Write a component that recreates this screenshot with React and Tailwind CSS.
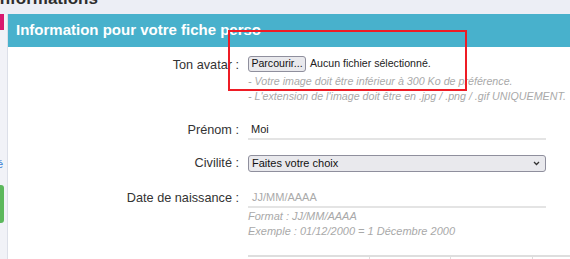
import React from 'react';

const font = { fontFamily: '"Liberation Sans", Arial, sans-serif' };

const Row = ({ label, labelClass = '', className = '', children }) => (
  <div className={`flex items-start ${className}`}>
    <div className={`w-[232px] shrink-0 text-right text-[12.7px] text-[#333] pr-[1px] ${labelClass}`}>{label}</div>
    <div className="ml-[8px] w-[298px] shrink-0">{children}</div>
  </div>
);

const Help = ({ lines, className = '' }) => (
  <div className={`text-[10.7px] italic leading-[15px] text-[#a9a9a9] ${className}`}>
    {lines.map((l) => (
      <div key={l} className="whitespace-nowrap">{l}</div>
    ))}
  </div>
);

export default function App() {
  return (
    <div className="relative h-[259px] w-[570px] overflow-hidden bg-[#eceef5]" style={font}>
      {/* page title, mostly scrolled away */}
      <div className="h-[14px] overflow-hidden">
        <div className="-ml-[5px] -mt-[10px] text-[17px] font-bold leading-[17px] text-[#2d2d2d]">Informations</div>
      </div>

      <div className="flex h-[245px]">
        {/* side menu edge */}
        <div className="w-[8px] shrink-0 overflow-hidden border-r border-[#dcdfe8] bg-[#f1f2f7]">
          <div className="h-[16px] w-[4px] bg-[#d8186f]" />
          <div className="mt-[128px] -ml-[3px] h-[12px] text-[11px] leading-[12px] text-[#3b82d6]">é</div>
          <div className="mt-[15px] h-[38px] w-[4px] rounded-r-[3px] bg-[#5cb85c]" />
        </div>

        {/* card */}
        <div className="min-w-0 flex-1 bg-white">
          <div className="flex h-[33px] items-center bg-[#48b1cc] pl-[8px] text-[15px] font-bold whitespace-nowrap text-white">
            Information pour votre fiche perso
          </div>

          <Row label="Ton avatar :" className="mt-[9px]" labelClass="leading-[16px] pt-[1px]">
            <div className="flex h-[16px] items-center whitespace-nowrap">
              <span className="flex h-[16px] w-[58px] items-center justify-center rounded-[3px] border border-[#8f8f9d] bg-[#e9e9ed] text-[10.6px] text-[#111]">
                Parcourir...
              </span>
              <span className="ml-[4px] text-[10.6px] text-[#222]">Aucun fichier sélectionné.</span>
            </div>
            <Help
              className="mt-[2px]"
              lines={[
                '- Votre image doit être inférieur à 300 Ko de préférence.',
                "- L'extension de l'image doit être en .jpg / .png / .gif UNIQUEMENT.",
              ]}
            />
          </Row>

          <Row label="Prénom :" className="mt-[17px]" labelClass="leading-[19px]">
            <div className="flex h-[19px] items-center border-b-2 border-[#e4e4e4] pl-[3px] text-[11px] text-[#222]">Moi</div>
          </Row>

          <Row label="Civilité :" className="mt-[15px]" labelClass="leading-[17px]">
            <div className="flex h-[17px] items-center justify-between rounded-[3px] border border-[#8f8f9d] bg-[#e9e9ed] pl-[3px] pr-[5px] text-[11px] text-[#111]">
              <span>Faites votre choix</span>
              <svg width="7" height="5" viewBox="0 0 7 5" fill="none" stroke="#333" strokeWidth="1.3">
                <path d="M1 1l2.5 2.5L6 1" />
              </svg>
            </div>
          </Row>

          <Row label="Date de naissance :" className="mt-[17px]" labelClass="leading-[19px]">
            <div className="flex h-[19px] items-center border-b-2 border-[#e4e4e4] pl-[4px] text-[11px] text-[#aaa]">JJ/MM/AAAA</div>
            <Help
              className="mt-[1px] text-[11px]"
              lines={['Format : JJ/MM/AAAA', 'Exemple : 01/12/2000 = 1 Décembre 2000']}
            />
          </Row>

          <div className="ml-[240px] mt-[16px] flex h-[4px] w-[330px]">
            <div className="w-[121px] border-t-2 border-[#dedede]" />
            <div className="w-[81px] border-t-2 border-l border-[#dedede]" />
            <div className="w-[82px] border-t-2 border-l border-[#dedede]" />
            <div className="flex-1 border-t-2 border-l border-[#dedede]" />
          </div>
        </div>
      </div>

      {/* annotation frame */}
      <div className="absolute left-[228px] top-[30px] h-[61px] w-[239px] border-2 border-[#ee1c25]" />
    </div>
  );
}
